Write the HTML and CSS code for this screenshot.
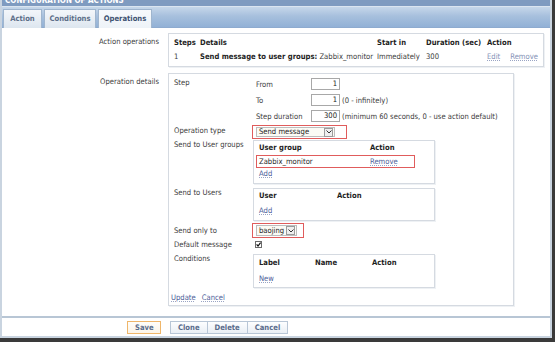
FILE: index.html
```html
<!DOCTYPE html>
<html lang="en">
  <head>
    <meta charset="UTF-8">
    <title>Configuration of actions</title>
    <link rel="stylesheet" href="styles.css">
  </head>
  <body>
    <div class="shot">
      <div class="window">
        <div class="title"><span>CONFIGURATION OF ACTIONS</span></div>

        <div class="tabs">
          <span class="tab tab-action">Action</span>
          <span class="tab tab-conditions">Conditions</span>
          <span class="tab tab-operations active">Operations</span>
        </div>

        <div class="form">
          <div class="form-label">Action operations</div>
          <div class="box ops">
            <div class="ops-grid">
              <b>Steps</b>
              <b>Details</b>
              <b>Start in</b>
              <b>Duration (sec)</b>
              <b>Action</b>
              <span>1</span>
              <span><b>Send message to user groups:</b> Zabbix_monitor</span>
              <span>Immediately</span>
              <span>300</span>
              <span class="ops-links"><a class="link pale">Edit</a><a class="link pale">Remove</a></span>
            </div>
          </div>

          <div class="form-label">Operation details</div>
          <div class="box details">
            <div class="d-row">
              <div class="d-label step-label">Step</div>
              <div class="step-grid">
                <span>From</span>
                <span class="input">1</span>
                <span></span>
                <span>To</span>
                <span class="input">1</span>
                <span class="hint">(0 - infinitely)</span>
                <span>Step duration</span>
                <span class="input">300</span>
                <span class="hint">(minimum 60 seconds, 0 - use action default)</span>
              </div>
            </div>

            <div class="d-row row-optype">
              <div class="d-label">Operation type</div>
              <div>
                <span class="mark mark-optype">
                  <span class="select select-optype">Send message<span class="arrow"><svg width="6" height="4" viewBox="0 0 6 4"><path d="M0.5 0.5 L3 3 L5.5 0.5" fill="none" stroke="#333" stroke-width="1"/></svg></span></span>
                </span>
              </div>
            </div>

            <div class="d-row row-groups">
              <div class="d-label box-label">Send to User groups</div>
              <div class="inner">
                <div class="inner-head cols-groups"><b>User group</b><b>Action</b></div>
                <div class="mark-row cols-groups"><span>Zabbix_monitor</span><a class="link">Remove</a></div>
                <div class="inner-foot"><a class="link">Add</a></div>
              </div>
            </div>

            <div class="d-row row-users">
              <div class="d-label box-label">Send to Users</div>
              <div class="inner">
                <div class="inner-head cols-users"><b>User</b><b>Action</b></div>
                <div class="inner-foot spaced"><a class="link">Add</a></div>
              </div>
            </div>

            <div class="d-row row-only">
              <div class="d-label only-label">Send only to</div>
              <div>
                <span class="mark mark-only">
                  <span class="select select-only">baojing<span class="arrow"><svg width="6" height="4" viewBox="0 0 6 4"><path d="M0.5 0.5 L3 3 L5.5 0.5" fill="none" stroke="#333" stroke-width="1"/></svg></span></span>
                </span>
              </div>
            </div>

            <div class="d-row row-default">
              <div class="d-label box-label">Default message</div>
              <div>
                <svg class="check" width="7" height="7" viewBox="0 0 7 7"><rect x="0.5" y="0.5" width="6" height="6" fill="#fff" stroke="#6a6a6a"/><path d="M1.6 3.4 L3 5 L5.6 1.6" fill="none" stroke="#111" stroke-width="1.2"/></svg>
              </div>
            </div>

            <div class="d-row row-conditions">
              <div class="d-label box-label">Conditions</div>
              <div class="inner inner-cond">
                <div class="inner-head cols-cond"><b>Label</b><b>Name</b><b>Action</b></div>
                <div class="inner-foot cond-new"><a class="link">New</a></div>
              </div>
            </div>

            <div class="form-actions">
              <a class="link">Update</a>
              <a class="link">Cancel</a>
            </div>
          </div>
        </div>

        <div class="footer">
          <button class="btn btn-save">Save</button>
          <div class="btn-group">
            <button class="btn">Clone</button>
            <button class="btn">Delete</button>
            <button class="btn">Cancel</button>
          </div>
        </div>
      </div>
    </div>
  </body>
</html>
```

FILE: styles.css
```css
body {
  margin: 0;
  background: #fff;
  font-family: "DejaVu Sans Condensed", "DejaVu Sans", sans-serif;
  font-stretch: semi-condensed;
  font-size: 7.6px;
  color: #3c3c3c;
}

b {
  color: #1e1e1e;
}

.shot {
  width: 552px;
  height: 338px;
  border-right: 3px solid #3a3a3a;
  border-bottom: 4px solid #3a3a3a;
}

.window {
  height: 100%;
  box-sizing: border-box;
  border-left: 2px solid #c9d4e0;
  border-right: 2px solid #c9d4e0;
  border-bottom: 2px solid #c9d4e0;
  display: flex;
  flex-direction: column;
}

/* header strip, cut off at the top */
.title {
  height: 6px;
  overflow: hidden;
  background: #7f9bc0;
  border-bottom: 1px solid #dbe5f0;
  padding-left: 3px;
}

.title span {
  display: block;
  margin-top: -3px;
  line-height: 8px;
  font-size: 8px;
  font-weight: bold;
  color: #fff;
}

.tabs {
  height: 21px;
  box-sizing: border-box;
  background: linear-gradient(#c6d7ea, #a7c0dd 45%, #92b1d6);
  border-bottom: 1px solid #8eabcf;
  display: flex;
  align-items: flex-end;
  gap: 2px;
  padding-left: 1px;
}

.tab {
  height: 19px;
  margin-bottom: -1px;
  box-sizing: border-box;
  line-height: 17px;
  border: 1px solid #9fb5ce;
  border-bottom: none;
  background: linear-gradient(#f3f6fa, #dde6ef);
  font-weight: bold;
  color: #5d6f89;
  text-align: center;
}

.tab-action { width: 39px; }
.tab-conditions { width: 52px; }
.tab-operations { width: 54px; }

.tab.active {
  background: linear-gradient(#f7f9fc, #eef3f8);
  color: #3e5272;
}

.form {
  display: grid;
  grid-template-columns: 158px auto;
  column-gap: 8px;
  row-gap: 6px;
  align-items: start;
  padding: 5px 0 10px;
}

.form-label {
  text-align: right;
  line-height: 12px;
  padding-top: 3px;
  padding-right: 1px;
}

.box {
  border: 1px solid #d5dae1;
  background: #fff;
  box-shadow: 1px 1px 0 #eef1f4;
}

.ops {
  width: 376px;
  box-sizing: border-box;
  padding: 2px 5px;
}

.ops-grid {
  display: grid;
  grid-template-columns: 26px 177px 49px 61px 1fr;
  grid-auto-rows: 14px;
  line-height: 14px;
  white-space: nowrap;
}

.ops-links {
  display: flex;
  gap: 10px;
}

.link {
  color: #4d5e99;
  text-decoration: underline dotted #9aa5c4;
  text-underline-offset: 1px;
}

.link.pale {
  color: #8391b6;
}

.details {
  width: 346px;
  box-sizing: border-box;
  padding: 2px 5px 1px;
}

.d-row {
  display: grid;
  grid-template-columns: 79px auto;
  align-items: start;
}

.d-label {
  line-height: 12px;
  padding-top: 1px;
  white-space: nowrap;
}

.d-label.box-label {
  line-height: 10px;
  padding-top: 0;
}

.step-grid {
  display: grid;
  grid-template-columns: 55px 29px auto;
  grid-auto-rows: 16px;
  align-items: center;
  padding-left: 3px;
  white-space: nowrap;
}

.input {
  height: 12px;
  box-sizing: border-box;
  border: 1px solid #a8a8a8;
  text-align: right;
  padding-right: 2px;
  line-height: 10px;
  color: #222;
}

.hint {
  padding-left: 2px;
}

.mark {
  display: block;
  box-sizing: border-box;
  border: 1px solid #e05c5c;
  margin-left: -1px;
  padding: 1px 0 1px 3px;
}

.mark-optype {
  width: 95px;
  height: 14px;
  margin-top: 1px;
}

.mark-only {
  width: 52px;
  height: 15px;
  padding-top: 1px;
}

.select {
  display: flex;
  align-items: center;
  justify-content: space-between;
  box-sizing: border-box;
  height: 10px;
  border: 1px solid #bdbdbd;
  background: #fbfbf5;
  padding-left: 2px;
  line-height: 8px;
  color: #222;
}

.select-optype { width: 79px; }
.select-only { width: 41px; height: 11px; }

.arrow {
  display: flex;
  align-items: center;
  justify-content: center;
  width: 7px;
  height: 7px;
  border: 1px solid #9c9c9c;
  background: #efefef;
  margin-right: 1px;
}

.row-groups { margin-top: 1px; }
.row-users { margin-top: 4px; }
.row-only { margin-top: 2px; }
.row-default { margin-top: 2px; }
.row-conditions { margin-top: 4px; }

.only-label {
  padding-top: 2px;
  line-height: 11px;
}

.inner {
  width: 182px;
  box-sizing: border-box;
  border: 1px solid #d5dae1;
  box-shadow: 1px 1px 0 #eef1f4;
  padding: 1px 2px 3px;
}

.inner-cond {
  padding: 2px 2px 2px;
}

.inner-head {
  display: grid;
  line-height: 12px;
  padding-left: 3px;
}

.cols-groups { grid-template-columns: 111px auto; }
.cols-users { grid-template-columns: 78px auto; }
.cols-cond { grid-template-columns: 56px 57px auto; }

.mark-row {
  display: grid;
  width: 159px;
  box-sizing: border-box;
  border: 1px solid #e05c5c;
  margin-top: 1px;
  padding-left: 2px;
  line-height: 11px;
  color: #2a2a2a;
}

.inner-foot {
  line-height: 12px;
  padding-left: 3px;
}

.inner-foot.spaced {
  margin-top: 3px;
}

.inner-foot.cond-new {
  margin-top: 4px;
}

.check {
  display: block;
  margin-left: 2px;
  margin-top: 1px;
}

.form-actions {
  display: flex;
  gap: 6px;
  margin-top: 4px;
  margin-left: -3px;
  line-height: 12px;
}

.footer {
  border-top: 2px solid #b8c6d5;
  padding: 3px 0 1px 125px;
  display: flex;
  gap: 9px;
}

.btn-group {
  display: flex;
}

.btn {
  height: 13px;
  box-sizing: border-box;
  margin: 0;
  padding: 0 7px;
  border: 1px solid #b8c6d6;
  background: linear-gradient(#fdfeff, #eaeff5);
  font: inherit;
  font-weight: bold;
  line-height: 11px;
  color: #5a6c8b;
}

.btn-group .btn + .btn {
  border-left: none;
}

.btn-save {
  width: 34px;
  border-color: #efb66a;
  background: linear-gradient(#fffefb, #fbf4e8);
}
```
